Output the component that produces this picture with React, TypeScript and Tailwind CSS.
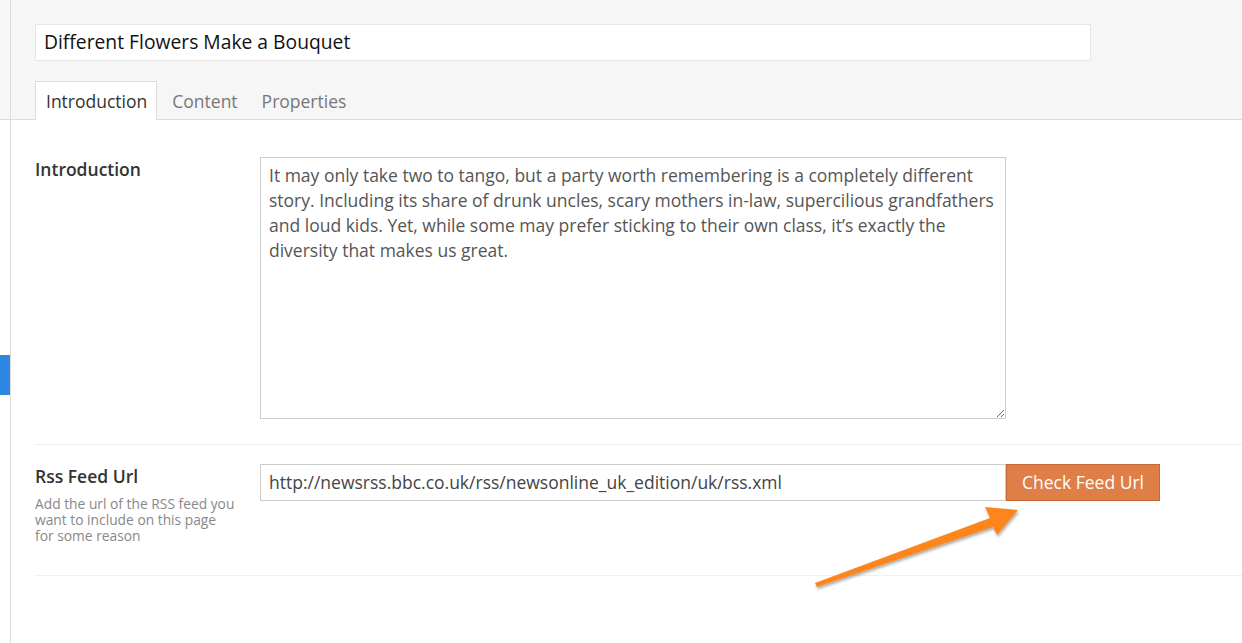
import React from 'react';

const intro =
  'It may only take two to tango, but a party worth remembering is a completely different story. Including its share of drunk uncles, scary mothers in-law, supercilious grandfathers and loud kids. Yet, while some may prefer sticking to their own class, it\u2019s exactly the diversity that makes us great.';

function Arrow() {
  return (
    <svg className="absolute left-0 top-0 pointer-events-none" width="1242" height="643">
      <defs>
        <filter id="arrowShadow" x="-10%" y="-30%" width="120%" height="160%">
          <feDropShadow dx="1" dy="2" stdDeviation="1.5" floodColor="#000" floodOpacity="0.35" />
        </filter>
      </defs>
      <polygon
        points="815,583 990,518 985,507 1018,510 997,535 993,527 817,587"
        fill="#fd861a"
        filter="url(#arrowShadow)"
      />
    </svg>
  );
}

export default function App() {
  return (
    <div className="relative flex h-[643px] w-[1242px] overflow-hidden bg-white font-['Open_Sans',sans-serif]">
      {/* left rail */}
      <div className="flex w-[11px] shrink-0 flex-col border-r border-[#dcdcdc]">
        <div className="h-[120px] border-b border-[#dcdcdc] bg-[#f6f6f6]" />
        <div className="mt-[235px] h-[40px] w-[10px] bg-[#2d87e2]" />
      </div>

      <div className="flex min-w-0 flex-1 flex-col">
        {/* header */}
        <div className="flex h-[120px] flex-col justify-between border-b border-[#dcdcdc] bg-[#f6f6f6] pl-6 pt-6">
          <div className="flex h-[37px] w-[1056px] items-center border border-[#e6e6e6] bg-white px-2 text-[19.3px] text-[#111]">
            Different Flowers Make a Bouquet
          </div>
          <div className="-mb-px flex items-end text-[17.5px]">
            <div className="flex h-[39px] items-center border border-b-0 border-[#dcdcdc] bg-white pl-[10px] pr-[9px] text-[#333]">
              Introduction
            </div>
            <div className="flex h-[38px] items-center pl-[15px] pr-[12px] text-[#777]">Content</div>
            <div className="flex h-[38px] items-center px-[12px] text-[#777]">Properties</div>
          </div>
        </div>

        {/* introduction row */}
        <div className="ml-6 flex h-[325px] border-b border-[#f0f0f0] pt-[37px]">
          <div className="w-[225px] shrink-0 text-[17.5px] font-semibold leading-[24px] text-[#333]">Introduction</div>
          <textarea
            readOnly
            defaultValue={intro}
            className="h-[262px] w-[746px] resize border border-[#cccccc] pl-2 pr-1 pt-[5px] text-[17.5px] leading-[25px] text-[#555] outline-none"
          />
        </div>

        {/* rss row */}
        <div className="ml-6 flex h-[131px] border-b border-[#f0f0f0] pt-[19px]">
          <div className="w-[225px] shrink-0">
            <div className="text-[17.5px] font-semibold leading-[24px] text-[#333]">Rss Feed Url</div>
            <div className="mt-[8px] w-[201px] text-[13.8px] leading-[16px] text-[#888]">
              Add the url of the RSS feed you want to include on this page for some reason
            </div>
          </div>
          <div className="flex h-[37px]">
            <div className="flex w-[746px] items-center border border-[#cccccc] px-2 text-[17.5px] text-[#444]">
              http://newsrss.bbc.co.uk/rss/newsonline_uk_edition/uk/rss.xml
            </div>
            <button className="flex w-[154px] items-center justify-center border border-[#c46a38] bg-[#df7e47] text-[17.5px] text-white">
              Check Feed Url
            </button>
          </div>
        </div>
      </div>

      <Arrow />
    </div>
  );
}
